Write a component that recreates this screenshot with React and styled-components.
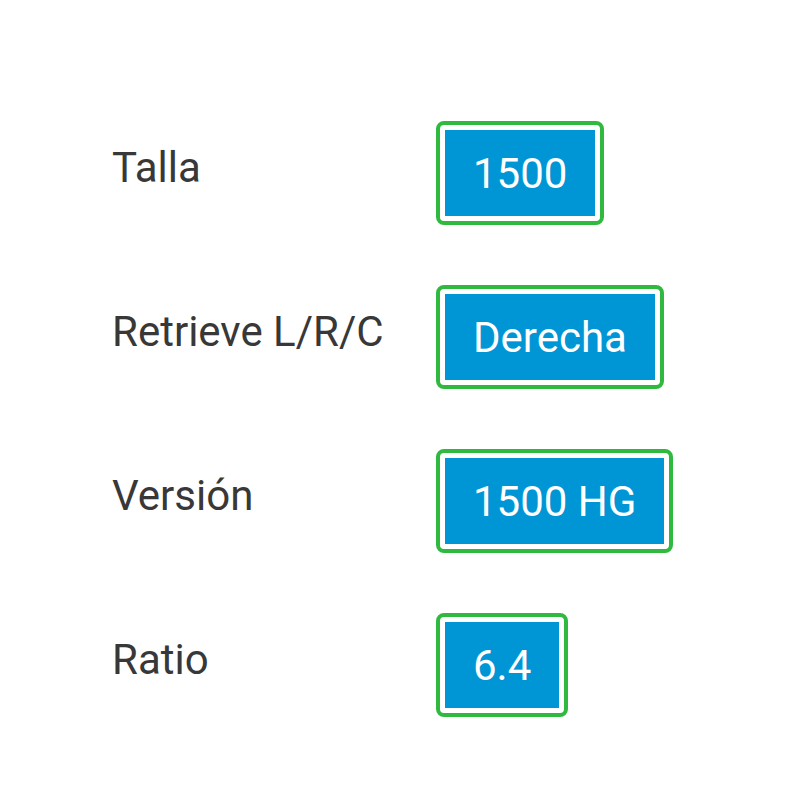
import React from 'react'
import styled, { createGlobalStyle } from 'styled-components'

const Global = createGlobalStyle`
  body {
    margin: 0;
    background: #ffffff;
    font-family: Roboto, "Liberation Sans", sans-serif;
  }
`

const specs = [
  { label: 'Talla', value: '1500' },
  { label: 'Retrieve L/R/C', value: 'Derecha' },
  { label: 'Versión', value: '1500 HG' },
  { label: 'Ratio', value: '6.4' },
]

export default function App() {
  return (
    <>
      <Global />
      <Page>
        <SpecGrid>
          {specs.map((s, i) => (
            <React.Fragment key={i}>
              <Label>{s.label}</Label>
              <Cell>
                <Frame>
                  <Value>{s.value}</Value>
                </Frame>
              </Cell>
            </React.Fragment>
          ))}
        </SpecGrid>
      </Page>
    </>
  )
}

const Page = styled.div`
  padding: 121px 0 0 112px;
`

const SpecGrid = styled.div`
  display: grid;
  grid-template-columns: 324px auto;
  row-gap: 60px;
`

const Label = styled.div`
  padding-top: 23px;
  font-size: 42px;
  line-height: 47px;
  color: #383838;
`

const Cell = styled.div`
  display: flex;
  align-items: flex-start;
`

const Frame = styled.div`
  border: 4px solid #2fb93f;
  border-radius: 8px;
  padding: 5px;
  background: #ffffff;
`

const Value = styled.div`
  background: #0096d6;
  color: #ffffff;
  font-size: 42px;
  line-height: 47px;
  padding: 20px 28px 19px;
  white-space: nowrap;
`
